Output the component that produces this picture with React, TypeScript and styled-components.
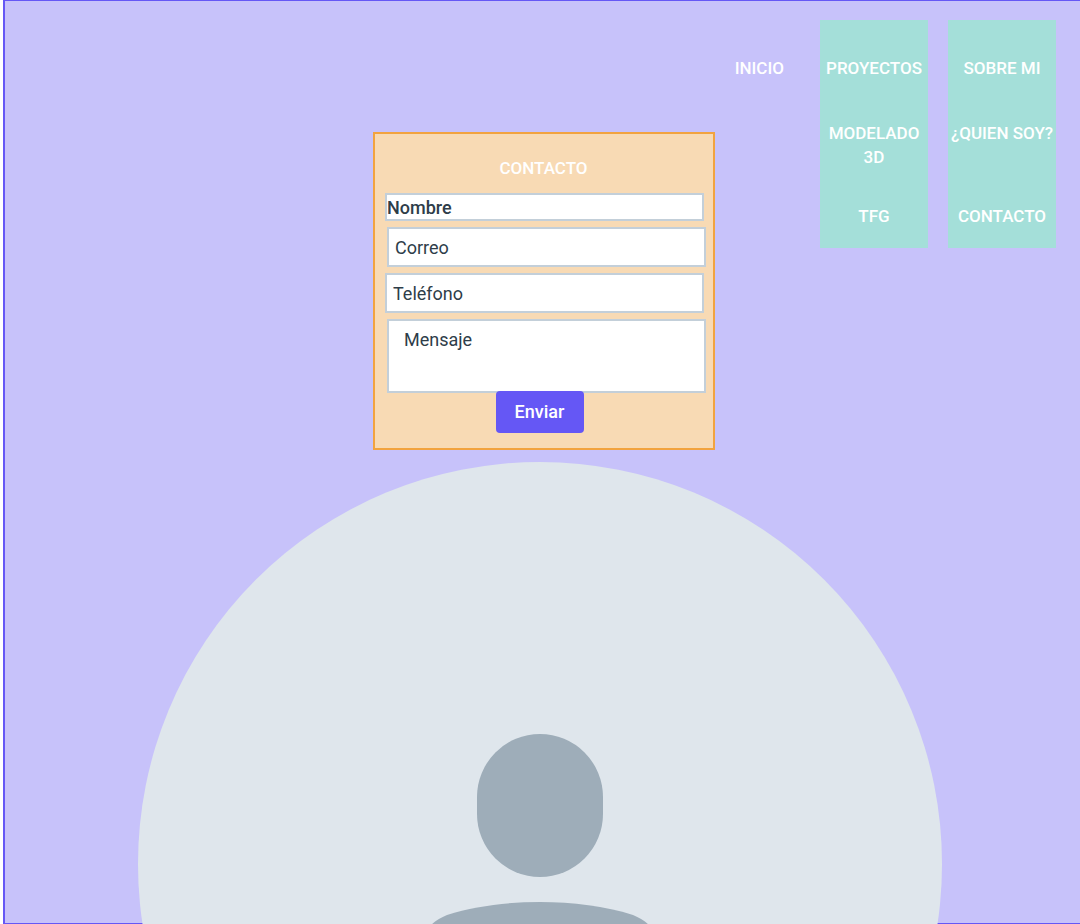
import React from "react";
import styled, { createGlobalStyle } from "styled-components";

const GlobalStyle = createGlobalStyle`
  *, *::before, *::after { box-sizing: border-box; }
  body {
    margin: 0;
    background: #ffffff;
    color: #2e3d49;
    font-family: Roboto, "Liberation Sans", sans-serif;
    font-size: 18px;
    line-height: 24px;
  }
`;

const Frame = styled.div`
  display: flex;
  flex-direction: column;
  min-height: 100vh;
  margin-left: 3px;
  border: 1px solid #6557f5;
  border-left-width: 2px;
  border-right: 0;
  background: #c7c2fa;
`;

const Top = styled.div`
  display: grid;
  grid-template-columns: 1fr 342px 1fr;
  align-items: start;
  padding-left: 3px;
`;

const Nav = styled.nav`
  grid-column: 3;
  grid-row: 1;
  display: flex;
  justify-content: flex-end;
  align-items: flex-start;
  gap: 20px;
  padding: 19px 24px 0 0;
  font-size: 17px;
`;

const NavLink = styled.a`
  color: #ffffff;
  font-weight: 500;
  text-decoration: none;
`;

const Home = styled.div`
  padding: 36px 16px 0 0;
`;

const Menu = styled.div`
  display: flex;
  flex-direction: column;
  width: 108px;
  padding: 36px 0 20px;
  background: #a4dfd9;
  text-align: center;
`;

const MenuList = styled.ul`
  display: grid;
  grid-template-rows: 48px 24px;
  gap: 35px;
  margin: 41px 0 0;
  padding: 0;
  list-style: none;
`;

const MenuItem = styled.li`
  white-space: pre;
`;

const Card = styled.form`
  grid-column: 2;
  grid-row: 1;
  display: flex;
  flex-direction: column;
  margin-top: 131px;
  padding: 22px 7px 15px 10px;
  border: 2px solid #f2a33f;
  background: #f8dab4;
`;

const Title = styled.h1`
  margin: 0 0 13px;
  padding-right: 4px;
  color: #ffffff;
  font-size: 17px;
  font-weight: 500;
  line-height: 24px;
  text-align: center;
`;

const Fields = styled.div`
  display: flex;
  flex-direction: column;
  gap: 6px;
`;

const Field = styled.input<{ $compact?: boolean; $end?: boolean }>`
  align-self: ${(p) => (p.$end ? "flex-end" : "flex-start")};
  width: 319px;
  height: ${(p) => (p.$compact ? "28px" : "40px")};
  padding: 0 ${(p) => (p.$compact ? "0" : "6px")};
  border: 2px solid #c3cfd9;
  border-radius: 0;
  background: #ffffff;
  color: inherit;
  font: inherit;
  font-weight: ${(p) => (p.$compact ? 500 : 400)};
  &::placeholder { color: #2e3d49; opacity: 1; }
`;

const Message = styled(Field)`
  height: 74px;
  padding: 7px 15px;
  resize: none;
`;

const Submit = styled.button`
  position: relative;
  align-self: center;
  width: 88px;
  height: 42px;
  margin: -2px 12px 0 0;
  padding: 0;
  border: 0;
  border-radius: 4px;
  background: #6557f5;
  color: #ffffff;
  font: inherit;
  font-weight: 500;
`;

const Portrait = styled.div`
  display: flex;
  justify-content: center;
  margin: 12px 0 -1px;
  padding-right: 5px;
`;

const Avatar = styled.svg`
  display: block;
  width: 804px;
  max-width: 100%;
  height: auto;
`;

const menus = [
  { title: "PROYECTOS", items: ["MODELADO\n3D", "TFG"] },
  { title: "SOBRE MI", items: ["¿QUIEN SOY?", "CONTACTO"] },
];

export default function App() {
  return (
    <>
      <GlobalStyle />
      <Frame>
        <Top>
          <Nav>
            <Home>
              <NavLink href="#inicio">INICIO</NavLink>
            </Home>
            {menus.map((menu) => (
              <Menu key={menu.title}>
                <NavLink href="#">{menu.title}</NavLink>
                <MenuList>
                  {menu.items.map((item) => (
                    <MenuItem key={item}>
                      <NavLink href="#">{item}</NavLink>
                    </MenuItem>
                  ))}
                </MenuList>
              </Menu>
            ))}
          </Nav>
          <Card onSubmit={(e: React.FormEvent) => e.preventDefault()}>
            <Title>CONTACTO</Title>
            <Fields>
              <Field $compact type="text" aria-label="Nombre" placeholder="Nombre" />
              <Field $end type="email" aria-label="Correo" placeholder="Correo" />
              <Field type="tel" aria-label="Teléfono" placeholder="Teléfono" />
              <Message as="textarea" $end aria-label="Mensaje" placeholder="Mensaje" />
            </Fields>
            <Submit type="submit">Enviar</Submit>
          </Card>
        </Top>
        <Portrait>
          <Avatar viewBox="0 0 804 462" aria-hidden="true">
            <circle cx="402" cy="402" r="402" fill="#dfe6ec" />
            <rect x="339" y="272" width="126" height="143" rx="63" fill="#9eadb9" />
            <path
              d="M292 464C297 459 302 456 309 453C337 444 369 440 402 440C435 440 467 444 495 453C502 456 507 459 512 464Z"
              fill="#9eadb9"
            />
          </Avatar>
        </Portrait>
      </Frame>
    </>
  );
}
